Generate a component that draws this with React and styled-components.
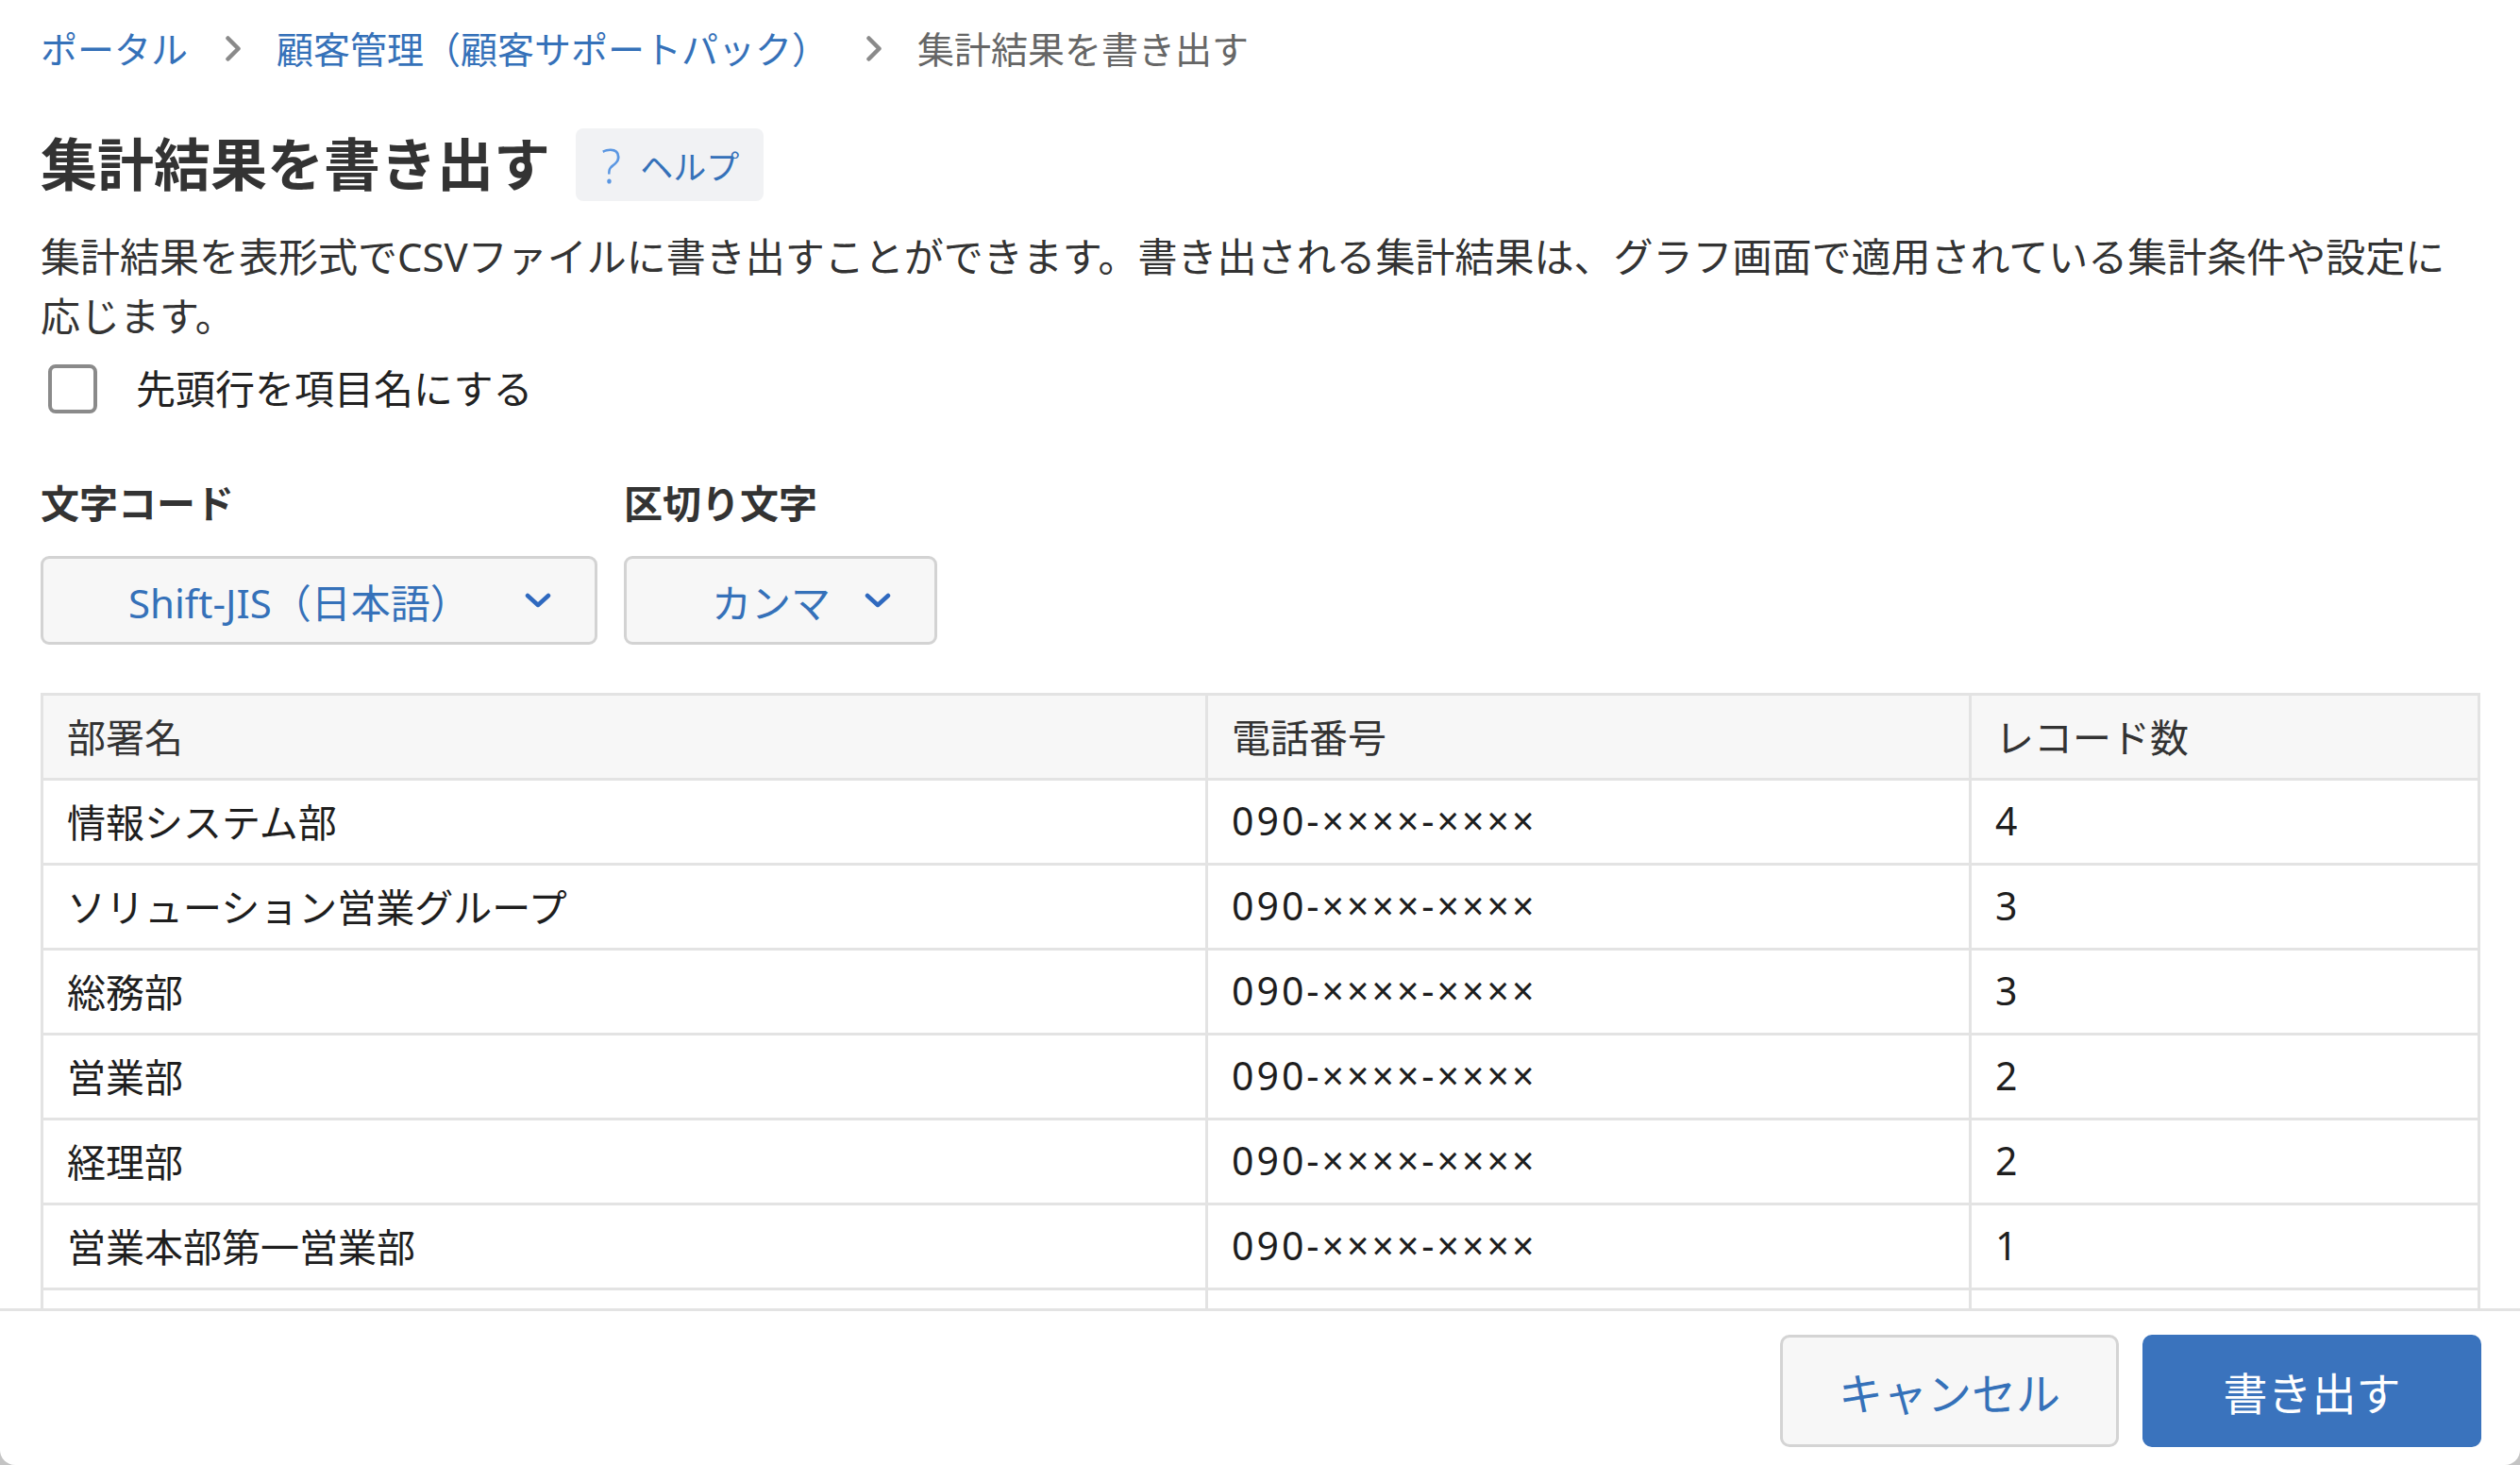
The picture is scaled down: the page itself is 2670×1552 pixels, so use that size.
import React from "react";
import styled, { createGlobalStyle } from "styled-components";

const GlobalStyle = createGlobalStyle`
  html, body {
    margin: 0;
    padding: 0;
    overflow: hidden;
    background: #c4c4c4;
  }
  body {
    font-family: "Noto Sans", "Noto Sans CJK JP", sans-serif;
    color: #333333;
  }
`;

const rows = [
  { name: "情報システム部", tel: "090-××××-××××", count: 4 },
  { name: "ソリューション営業グループ", tel: "090-××××-××××", count: 3 },
  { name: "総務部", tel: "090-××××-××××", count: 3 },
  { name: "営業部", tel: "090-××××-××××", count: 2 },
  { name: "経理部", tel: "090-××××-××××", count: 2 },
  { name: "営業本部第一営業部", tel: "090-××××-××××", count: 1 },
  // next row sits under the footer, only its top border shows
  { name: "", tel: "", count: "" },
];

const Chevron = () => (
  <svg width="16" height="27" viewBox="0 0 16 27">
    <polyline
      points="2.5,2.5 13.5,13.5 2.5,24.5"
      fill="none"
      stroke="#8a8a8a"
      strokeWidth="4.5"
      strokeLinecap="round"
      strokeLinejoin="round"
    />
  </svg>
);

const ChevronDown = () => (
  <svg width="28" height="16" viewBox="0 0 28 16">
    <polyline
      points="3,3 14,13 25,3"
      fill="none"
      stroke="#2f69bf"
      strokeWidth="4.5"
      strokeLinecap="round"
      strokeLinejoin="round"
    />
  </svg>
);

const App = () => {
  return (
    <>
      <GlobalStyle />
      <Dialog>
        <Body>
          <Breadcrumb>
            <Crumb href="#">ポータル</Crumb>
            <Sep>
              <Chevron />
            </Sep>
            <Crumb href="#">顧客管理（顧客サポートパック）</Crumb>
            <Sep>
              <Chevron />
            </Sep>
            <Current>集計結果を書き出す</Current>
          </Breadcrumb>

          <TitleRow>
            <Title>集計結果を書き出す</Title>
            <HelpButton>
              <HelpMark>?</HelpMark>
              <span>ヘルプ</span>
            </HelpButton>
          </TitleRow>

          <Description>
            集計結果を表形式でCSVファイルに書き出すことができます。書き出される集計結果は、グラフ画面で適用されている集計条件や設定に応じます。
          </Description>

          <CheckRow>
            <CheckBox />
            <CheckLabel>先頭行を項目名にする</CheckLabel>
          </CheckRow>

          <Fields>
            <Field>
              <FieldLabel>文字コード</FieldLabel>
              <Select $width={590}>
                <span>Shift-JIS（日本語）</span>
                <ChevronDown />
              </Select>
            </Field>
            <Field>
              <FieldLabel>区切り文字</FieldLabel>
              <Select $width={332}>
                <span>カンマ</span>
                <ChevronDown />
              </Select>
            </Field>
          </Fields>

          <Table>
            <colgroup>
              <col style={{ width: 1234 }} />
              <col style={{ width: 809 }} />
              <col />
            </colgroup>
            <thead>
              <tr>
                <Th>部署名</Th>
                <Th>電話番号</Th>
                <Th>レコード数</Th>
              </tr>
            </thead>
            <tbody>
              {rows.map((r, i) => (
                <tr key={i}>
                  <Td>{r.name}</Td>
                  <Td $spaced>{r.tel}</Td>
                  <Td>{r.count}</Td>
                </tr>
              ))}
            </tbody>
          </Table>
        </Body>

        <Footer>
          <Button>キャンセル</Button>
          <Button $primary>書き出す</Button>
        </Footer>
      </Dialog>
    </>
  );
};

const Dialog = styled.div`
  height: 100vh;
  display: flex;
  flex-direction: column;
  background: #ffffff;
  border-radius: 0 0 16px 16px;
  overflow: hidden;
`;

const Body = styled.div`
  flex: 1;
  min-height: 0;
  overflow: hidden;
  padding: 23px 42px 0 43px;
`;

const Breadcrumb = styled.nav`
  display: flex;
  align-items: center;
  height: 57px;
  font-size: 39px;
  line-height: 57px;
`;

const Crumb = styled.a`
  color: #3571b9;
  text-decoration: none;
`;

const Sep = styled.span`
  display: flex;
  align-items: center;
  margin: 0 38px 0 40px;
`;

const Current = styled.span`
  color: #666666;
`;

const TitleRow = styled.div`
  margin-top: 56px;
  display: flex;
  align-items: center;
  gap: 27px;
`;

const Title = styled.h1`
  margin: 0;
  font-size: 60px;
  line-height: 77px;
  font-weight: 700;
  color: #333333;
`;

const HelpButton = styled.button`
  display: flex;
  align-items: center;
  gap: 20px;
  height: 77px;
  padding: 0 26px 0 27px;
  border: none;
  border-radius: 8px;
  background: #f1f2f4;
  color: #3571b9;
  font-family: inherit;
  font-size: 35px;
`;

const HelpMark = styled.span`
  color: #5b97e2;
  font-size: 50px;
  line-height: 1;
  font-weight: 300;
`;

const Description = styled.p`
  margin: 27px 0 0;
  font-size: 42px;
  line-height: 63px;
  color: #333333;
`;

const CheckRow = styled.label`
  margin-top: 19px;
  padding-left: 8px;
  display: flex;
  align-items: center;
  gap: 41px;
`;

const CheckBox = styled.span`
  width: 52px;
  height: 52px;
  box-sizing: border-box;
  border: 4px solid #8a8a8a;
  border-radius: 8px;
  background: #ffffff;
`;

const CheckLabel = styled.span`
  font-size: 42px;
  line-height: 53px;
  color: #222222;
`;

const Fields = styled.div`
  margin-top: 65px;
  display: flex;
  gap: 28px;
`;

const Field = styled.div`
  display: flex;
  flex-direction: column;
  gap: 26px;
`;

const FieldLabel = styled.div`
  font-size: 41px;
  line-height: 60px;
  font-weight: 700;
  color: #333333;
`;

const Select = styled.div`
  width: ${(p) => p.$width}px;
  height: 94px;
  box-sizing: border-box;
  display: flex;
  align-items: center;
  justify-content: space-between;
  padding: 0 46px 0 90px;
  background: #f7f7f7;
  border: 3px solid #d3d3d3;
  border-radius: 9px;
  color: #3571b9;
  font-size: 42px;
`;

const Table = styled.table`
  margin-top: 51px;
  width: 100%;
  table-layout: fixed;
  border-collapse: collapse;
  font-size: 41px;
`;

const Th = styled.th`
  height: 83px;
  padding: 0 25px 4px;
  text-align: left;
  font-weight: 400;
  color: #333333;
  background: #f7f7f7;
  border: 3px solid #e3e3e3;
`;

const Td = styled.td`
  height: 84px;
  padding: 0 25px 3px;
  color: #1e1e1e;
  border: 3px solid #e3e3e3;
  white-space: nowrap;
  letter-spacing: ${(p) => (p.$spaced ? "3px" : "0")};
`;

const Footer = styled.div`
  flex-shrink: 0;
  height: 166px;
  box-sizing: border-box;
  border-top: 3px solid #e3e3e3;
  padding: 25px 41px 0;
  display: flex;
  justify-content: flex-end;
  gap: 25px;
`;

const Button = styled.button`
  width: 359px;
  height: 119px;
  box-sizing: border-box;
  border-radius: 10px;
  font-family: inherit;
  font-size: 47px;
  border: 3px solid ${(p) => (p.$primary ? "#3a73bd" : "#d4d4d4")};
  background: ${(p) => (p.$primary ? "#3a73bd" : "#f7f7f7")};
  color: ${(p) => (p.$primary ? "#ffffff" : "#3571b9")};
`;

export default App;
